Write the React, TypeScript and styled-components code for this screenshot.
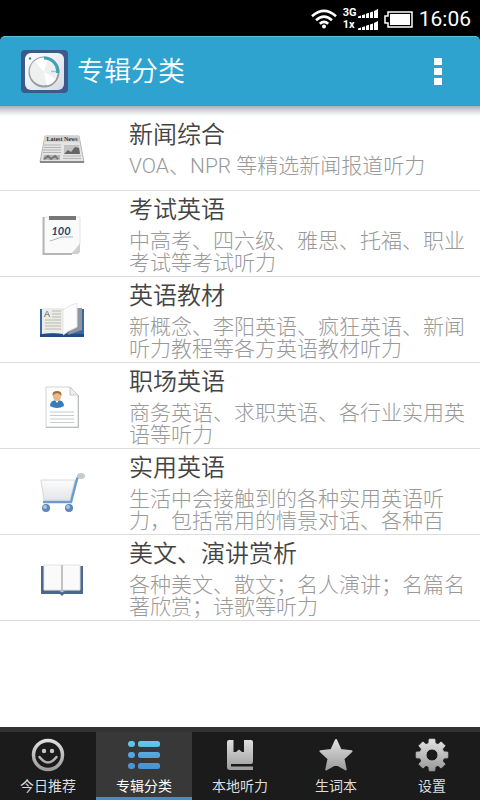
import React, { useState } from "react";
import styled, { createGlobalStyle } from "styled-components";

const GlobalStyle = createGlobalStyle`
  * { box-sizing: border-box; }
  body {
    margin: 0;
    background: #fff;
    font-family: Roboto, "Noto Sans CJK SC", sans-serif;
  }
  svg { display: block; }
`;

const Screen = styled.div`
  display: flex;
  flex-direction: column;
  min-height: 100vh;
`;

const StatusBar = styled.div`
  display: flex;
  align-items: center;
  justify-content: flex-end;
  height: 36px;
  padding: 2px 9px 0 0;
  background: #000;
  color: #fff;
`;

const Clock = styled.time`
  margin-left: 6px;
  font-size: 21px;
  line-height: 24px;
`;

const HeaderBack = styled.div`
  background: #000;
`;

const Header = styled.header`
  display: flex;
  align-items: center;
  height: 70px;
  padding: 0 30px 0 20px;
  background: #2ea3d0;
  border-top: 1px solid #62bfe0;
  border-radius: 5px 5px 0 0;
`;

const HeaderTitle = styled.h1`
  flex: 1;
  margin: 0 0 0 8px;
  font-size: 27px;
  line-height: 36px;
  font-weight: 350;
  color: #fff;
`;

const MenuButton = styled.button`
  display: grid;
  justify-items: center;
  gap: 3px;
  padding: 4px 8px;
  border: 0;
  background: none;
`;

const MenuDot = styled.span`
  width: 8px;
  height: 7px;
  background: #fff;
`;

const HeaderShadow = styled.div`
  height: 10px;
  background: linear-gradient(#a5b3b4, #d5d8d8 45%, #fff);
`;

const List = styled.ul`
  flex: 1;
  margin: 0;
  padding: 0;
  list-style: none;
`;

const Row = styled.li`
  display: grid;
  grid-template-columns: 123px 1fr;
  min-height: 75px;
  padding: 5px 10px 2px 6px;
  border-bottom: 1px solid #dcdcdc;
`;

const RowIcon = styled.div`
  display: flex;
  align-items: center;
  justify-content: center;
  padding-right: 12px;
`;

const RowTitle = styled.h2`
  margin: 0 0 6px;
  font-size: 24px;
  line-height: 28px;
  font-weight: 350;
  color: #444;
`;

const RowText = styled.p`
  margin: 0;
  font-size: 21px;
  line-height: 22px;
  font-weight: 300;
  color: #999;
`;

const TabBar = styled.nav`
  display: grid;
  grid-template-columns: repeat(5, 1fr);
  height: 73px;
  border-top: 5px solid #333;
  background: #1b1b1b;
`;

const Tab = styled.button<{ $active: boolean }>`
  display: flex;
  flex-direction: column;
  align-items: center;
  gap: 3px;
  padding: 5px 0 0;
  border: 0;
  border-bottom: 3px solid ${(p) => (p.$active ? "#3f8fd6" : "transparent")};
  background: ${(p) => (p.$active ? "#383838" : "transparent")};
  color: ${(p) => (p.$active ? "#fff" : "#ddd")};
  font-family: inherit;
  font-size: 14px;
  line-height: 20px;
`;

const WifiIcon = () => (
  <svg width="26" height="20" viewBox="0 0 26 20" fill="none" stroke="#fff" strokeWidth="2.6">
    <path d="M1 7.2Q13-3.4 25 7.2M5 11.2Q13 4 21 11.2M8.8 14.8Q13 11 17.2 14.8" />
    <circle cx="13" cy="17.6" r="2" fill="#fff" stroke="none" />
  </svg>
);

const Network = styled.div`
  display: grid;
  grid-template-columns: 13px 20px;
  column-gap: 2px;
  margin-left: 6px;
  font-size: 11px;
  line-height: 12px;
  font-weight: 700;
  align-items: center;
`;

const Bars = () => (
  <svg width="20" height="9" viewBox="0 0 20 9" fill="#fff">
    <path d="M0 9V7.5L3 6.6V9zM4 9V6.2l3-1V9zM8 9V4.8l3-1V9zM12 9V3.4l3-1V9zM16 9V2l4-2v9z" />
  </svg>
);

const Battery = styled.span`
  margin-left: 6px;
`;

const BatteryIcon = () => (
  <svg width="29" height="17" viewBox="0 0 29 17">
    <path d="M4 1h24v15H4v-4H1V5h3z" fill="none" stroke="#fff" strokeWidth="1.5" />
    <path d="M6 3h20v11H6z" fill="#fff" />
  </svg>
);

const AppIcon = () => (
  <svg width="49" height="45" viewBox="0 0 49 45">
    <defs>
      <linearGradient id="app" x2="1" y2="1">
        <stop stopColor="#fff" />
        <stop offset="1" stopColor="#d6dbe4" />
      </linearGradient>
    </defs>
    <rect x="1" y="1" width="47" height="43" rx="4" fill="#3c5a8c" />
    <rect x="5" y="4" width="39" height="37" rx="6" fill="url(#app)" />
    <circle cx="24" cy="23" r="15.5" fill="#999d9f" />
    <circle cx="23.8" cy="22.4" r="14" fill="#eef0f0" />
    <path d="M24 23 15 12.5A14 14 0 0 1 28 9.5zM24 23l12 7a14 14 0 0 1-9 6.5z" fill="#fff" />
    <path d="M24 7.5A15.5 15.5 0 0 1 39.4 24H36A12 12 0 0 0 24 10.5z" fill="#3ba3b3" />
    <circle cx="10" cy="9.5" r="1.2" fill="#3b8b91" />
    <path d="M31 22.5h5" stroke="#85cbea" strokeWidth="1.5" />
  </svg>
);

const NewsIcon = () => (
  <svg width="46" height="56" viewBox="0 0 46 56">
    <path d="M6 9h34l5 26H1z" fill="#e4e4e4" stroke="#b5b5b5" />
    <path d="M1 34h44v2H1z" fill="#888" />
    <path d="M4 15 6 9h34l1 6z" fill="#d2d2d2" />
    <text x="23" y="14" textAnchor="middle" fontFamily="Liberation Serif, serif" fontSize="6" fontWeight="700" fill="#333">Latest News</text>
    <path d="M5 18h17M5 20.5h17M4 23h18M4 25.5h18M24 29h18M24 31.5h18" stroke="#b5b5b5" />
    <path d="M25 18h15l1 9H25z" fill="#c2c2c2" />
    <path d="m25 27 4-4 3 2 4-5 4 1 1 6z" fill="#666" />
    <path d="m4 33 1-5h16v5z" fill="#b5b5b5" />
    <path d="m5 32 4-3 3 3 4-3 3 3" fill="none" stroke="#777" strokeWidth="2" />
  </svg>
);

const ExamIcon = () => (
  <svg width="40" height="42" viewBox="0 0 40 42">
    <path d="M2 3h36v27l-9 10H2z" fill="#fafafa" stroke="#e4e4e4" />
    <path d="M1.5 3v37H30" fill="none" stroke="#b5b5b5" strokeWidth="2" />
    <path d="M29 40q5-4 9-11v9l-2 2z" fill="#cfcfcf" />
    <path d="M7 2h27v4H7z" fill="#777" />
    <text x="19" y="21" textAnchor="middle" fontFamily="Lato, sans-serif" fontStyle="italic" fontWeight="700" fontSize="11" fill="#264467">100</text>
    <path d="m8 27 12-4 11 0" fill="none" stroke="#a9b5c4" />
  </svg>
);

const TextbookIcon = () => (
  <svg width="46" height="40" viewBox="0 0 46 40">
    <path d="M1 8h44v28H1z" fill="#3569a8" />
    <path d="M1 33h44v3H1z" fill="#234a86" />
    <path d="M37 7h6v22l-14 5z" fill="#8e969e" />
    <path d="M3 7h21v26q-10-2-21 0z" fill="#ecece6" />
    <path d="M24 32V9q6-5 14-7v24q-8 3-14 8" fill="#fcfcfc" stroke="#e6e6e6" />
    <text x="5" y="16" fontFamily="Liberation Sans, sans-serif" fontSize="9" fill="#555">A</text>
    <path d="M13 10h9M13 13h9M13 16h9M6 19h16M6 22h16M6 25h16M6 28h16" stroke="#b9b9b2" />
  </svg>
);

const ResumeIcon = () => (
  <svg width="36" height="44" viewBox="0 0 36 44">
    <path d="M2 2h24l8 8v32H2z" fill="#fefefe" stroke="#d2d2d2" />
    <path d="M34.5 10v32.5H2" fill="none" stroke="#bbb" />
    <path d="M26 2v8h8z" fill="#eee" stroke="#c8c8c8" />
    <path d="M6 21q0-6 7-6t7 6q-7 4-14 0" fill="#377cb9" />
    <path d="m11 15 2 3 2-3z" fill="#fff" />
    <ellipse cx="13" cy="11.5" rx="4" ry="4.5" fill="#e8b88b" />
    <path d="M8.5 11q-.5-5 4.500-5t4.500 5q-2-3-4.500-3t-4.500 3" fill="#a46a33" />
    <path d="M6 27h24M6 30.5h24M6 34h24M6 37.5h24" stroke="#c5ccd2" />
  </svg>
);

const CartIcon = () => (
  <svg width="46" height="42" viewBox="0 0 46 42">
    <defs>
      <linearGradient id="cart" x2="0" y2="1">
        <stop stopColor="#fcfcfc" />
        <stop offset="1" stopColor="#e4e6e8" />
      </linearGradient>
    </defs>
    <path d="M2 8h34l-5 20H5z" fill="url(#cart)" stroke="#d5d8da" />
    <path d="M4 30h28l6-23q1-3 4-3" fill="none" stroke="#6c9cce" strokeWidth="2.5" />
    <ellipse cx="42" cy="4" rx="4" ry="3" fill="#c4cbc9" />
    <circle cx="7" cy="36" r="4" fill="#5c87b6" />
    <circle cx="30" cy="36" r="4" fill="#5c87b6" />
    <circle cx="6" cy="35" r="2" fill="#a6c5e2" />
    <circle cx="29" cy="35" r="2" fill="#a6c5e2" />
  </svg>
);

const BookIcon = () => (
  <svg width="42" height="36" viewBox="0 0 42 36">
    <path d="M0 5h3v24h36V5h3v28H23l-2 2-2-2H0z" fill="#4a678c" />
    <path d="M3 4h36v25H3z" fill="#fafafa" stroke="#e2e2e2" />
    <path d="M3 29.5h15l3 1.5 3-1.5h15" fill="none" stroke="#9faebd" />
    <path d="M21 4v27" stroke="#c2c2c2" strokeWidth="2" />
  </svg>
);

const Gradients = () => (
  <svg width="0" height="0" style={undefined} aria-hidden="true">
    <defs>
      <linearGradient id="silver" gradientUnits="userSpaceOnUse" x1="0" y1="2" x2="0" y2="34">
        <stop stopColor="#e2e2e2" />
        <stop offset="1" stopColor="#999" />
      </linearGradient>
      <linearGradient id="sky" gradientUnits="userSpaceOnUse" x1="0" y1="3" x2="0" y2="32">
        <stop stopColor="#62d0e8" />
        <stop offset=".5" stopColor="#55a6df" />
        <stop offset="1" stopColor="#4691d2" />
      </linearGradient>
    </defs>
  </svg>
);

const TabIcon = ({ children }: { children: React.ReactNode }) => (
  <svg width="36" height="36" viewBox="0 0 36 36" fill="url(#silver)">
    {children}
  </svg>
);

const categories = [
  { title: "新闻综合", text: "VOA、NPR 等精选新闻报道听力", icon: <NewsIcon /> },
  { title: "考试英语", text: "中高考、四六级、雅思、托福、职业考试等考试听力", icon: <ExamIcon /> },
  { title: "英语教材", text: "新概念、李阳英语、疯狂英语、新闻听力教程等各方英语教材听力", icon: <TextbookIcon /> },
  { title: "职场英语", text: "商务英语、求职英语、各行业实用英语等听力", icon: <ResumeIcon /> },
  { title: "实用英语", text: "生活中会接触到的各种实用英语听力，包括常用的情景对话、各种百", icon: <CartIcon /> },
  { title: "美文、演讲赏析", text: "各种美文、散文；名人演讲；名篇名著欣赏；诗歌等听力", icon: <BookIcon /> },
];

const gearTeeth = [0, 45, 90, 135, 180, 225, 270, 315];

const tabs = [
  {
    label: "今日推荐",
    icon: (
      <>
        <circle cx="18" cy="18" r="14.5" fill="none" stroke="url(#silver)" strokeWidth="3.5" />
        <circle cx="14" cy="14" r="2.2" />
        <circle cx="22" cy="14" r="2.2" />
        <path d="M9.500 20q8.500 11 17 0" fill="none" stroke="url(#silver)" strokeWidth="2.5" strokeLinecap="round" />
      </>
    ),
  },
  {
    label: "专辑分类",
    icon: (
      <g fill="url(#sky)">
        <rect x="2" y="4" width="7" height="6" rx="3" />
        <rect x="12" y="4" width="22" height="6" rx="2.5" />
        <rect x="2" y="15" width="7" height="6" rx="3" />
        <rect x="12" y="15" width="22" height="6" rx="2.5" />
        <rect x="2" y="26" width="7" height="6" rx="3" />
        <rect x="12" y="26" width="22" height="6" rx="2.5" />
      </g>
    ),
  },
  {
    label: "本地听力",
    icon: (
      <path d="M7 3h4.500v12h2.500l3-2.500 3 2.500h2V3h7q2 0 2 2v20q0 2-2 2H9v2.500h22V33H8q-3 0-3-3V5q0-2 2-2" />
    ),
  },
  {
    label: "生词本",
    icon: (
      <path
        d="m18 3 4.600 10 10.900 1.300-8 7.400 2.200 10.800L18 27l-9.700 5.500 2.200-10.800-8-7.400L13.400 13z"
        stroke="url(#silver)"
        strokeWidth="2"
        strokeLinejoin="round"
      />
    ),
  },
  {
    label: "设置",
    icon: (
      <>
        <path
          d={gearTeeth
            .map((deg) => {
              const at = (r: number, off: number) => {
                const a = ((deg + off) * Math.PI) / 180;
                return `${18 + r * Math.sin(a)} ${18 - r * Math.cos(a)}`;
              };
              return `${deg === 0 ? "M" : "L"}${at(12, -15)}L${at(16, -10)}L${at(16, 10)}L${at(12, 15)}`;
            })
            .join("") + "ZM18 12a6 6 0 1 0 0 12 6 6 0 0 0 0-12Z"}
          fillRule="evenodd"
          stroke="url(#silver)"
          strokeLinejoin="round"
        />
      </>
    ),
  },
];

export default function App() {
  const [active, setActive] = useState(1);
  return (
    <Screen>
      <GlobalStyle />
      <StatusBar>
        <WifiIcon />
        <Network>
          <span>3G</span>
          <Bars />
          <span>1x</span>
          <Bars />
        </Network>
        <Battery>
          <BatteryIcon />
        </Battery>
        <Clock>16:06</Clock>
      </StatusBar>
      <HeaderBack>
        <Header>
          <AppIcon />
          <HeaderTitle>专辑分类</HeaderTitle>
          <MenuButton aria-label="菜单">
            <MenuDot />
            <MenuDot />
            <MenuDot />
          </MenuButton>
        </Header>
      </HeaderBack>
      <HeaderShadow />
      <List>
        {categories.map((item) => (
          <Row key={item.title}>
            <RowIcon>{item.icon}</RowIcon>
            <div>
              <RowTitle>{item.title}</RowTitle>
              <RowText>{item.text}</RowText>
            </div>
          </Row>
        ))}
      </List>
      <Gradients />
      <TabBar>
        {tabs.map((tab, i) => (
          <Tab key={tab.label} $active={i === active} onClick={() => setActive(i)}>
            <TabIcon>{tab.icon}</TabIcon>
            {tab.label}
          </Tab>
        ))}
      </TabBar>
    </Screen>
  );
}
